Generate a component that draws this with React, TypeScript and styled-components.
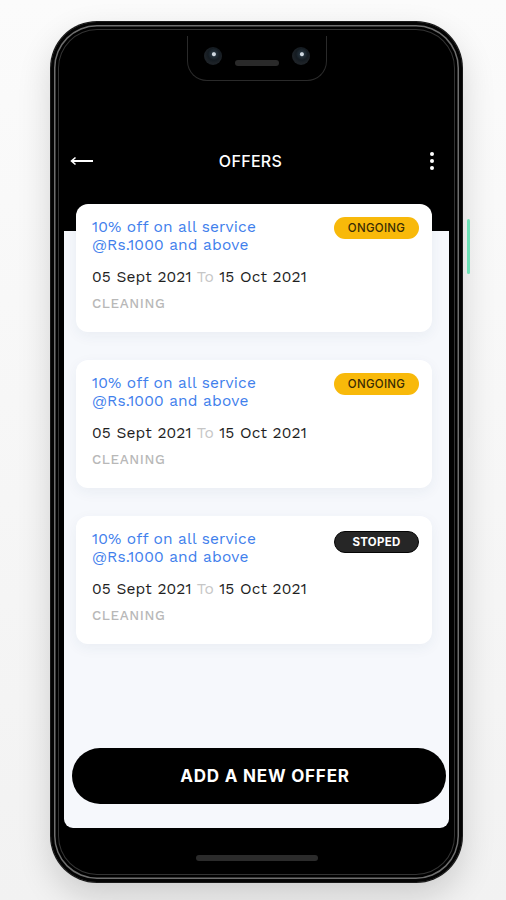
import React from "react";
import styled, { createGlobalStyle } from "styled-components";

const Global = createGlobalStyle`
  html, body { margin: 0; padding: 0; }
  body {
    background: linear-gradient(180deg, #fbfbfb 0%, #f2f2f2 100%);
    font-family: "Work Sans", Inter, "Open Sans", Arial, sans-serif;
    width: 506px;
    height: 900px;
    overflow: hidden;
  }
`;

const Stage = styled.div`
  display: flex;
  align-items: flex-start;
  padding: 22px 0 0 51px;
`;

const Phone = styled.div`
  width: 411px;
  height: 860px;
  box-sizing: border-box;
  padding: 14px 13px 12px 13px;
  background: #000;
  border-radius: 46px;
  display: flex;
  flex-direction: column;
  box-shadow:
    0 0 0 1px #1a1a1a,
    0 14px 34px rgba(0, 0, 0, 0.16),
    inset 0 0 0 3px #030303,
    inset 0 0 0 4.5px #6e6e6e,
    inset 0 0 0 7px #000,
    inset 0 0 0 8px #333;
`;

const Screen = styled.div`
  flex: 1;
  background: #000;
  border-radius: 34px;
  display: flex;
  flex-direction: column;
  overflow: hidden;
`;

const NotchRow = styled.div`
  display: flex;
  justify-content: center;
`;

const Notch = styled.div`
  width: 140px;
  height: 45px;
  box-sizing: border-box;
  border: 1px solid #2a2a2a;
  border-top: none;
  border-radius: 0 0 20px 20px;
  display: flex;
  align-items: center;
  justify-content: center;
  gap: 13px;
  padding-bottom: 4px;
`;

const Camera = styled.div`
  width: 18px;
  height: 18px;
  border-radius: 50%;
  background: radial-gradient(circle at 55% 40%, #cfd8e0 0 1.5px, #23303a 2.5px, #141b21 6px, #1d2227 9px);
`;

const Speaker = styled.div`
  width: 44px;
  height: 6px;
  border-radius: 3px;
  background: #2a2a2a;
  margin-top: 14px;
`;

const Header = styled.div`
  display: grid;
  grid-template-columns: 1fr auto 1fr;
  align-items: center;
  height: 24px;
  padding: 68px 14px 0 6px;
  margin-bottom: 58px;
`;

const BackButton = styled.div`
  width: 24px;
  height: 24px;
  display: flex;
  align-items: center;
`;

const Title = styled.div`
  color: #fff;
  font-family: Inter, "Open Sans", Arial, sans-serif;
  font-size: 16px;
  font-weight: 500;
  letter-spacing: 0.3px;
  margin-right: 4px;
`;

const Kebab = styled.div`
  justify-self: end;
  display: flex;
  flex-direction: column;
  gap: 3px;
  width: 6px;
  align-items: center;
`;

const Dot = styled.span`
  width: 4px;
  height: 4px;
  border-radius: 50%;
  background: #fff;
`;

const Content = styled.div`
  flex: 1;
  background: #f6f8fc;
  border-radius: 0 0 9px 9px;
  display: flex;
  flex-direction: column;
  padding: 0 3px 24px 8px;
`;

const CardList = styled.div`
  display: flex;
  flex-direction: column;
  gap: 28px;
  margin: -27px 14px 0 4px;
  flex: 1;
`;

const Card = styled.div`
  background: #fff;
  border-radius: 12px;
  box-shadow: 0 4px 14px rgba(40, 60, 110, 0.06);
  padding: 14px 13px 20px 16px;
  display: flex;
  justify-content: space-between;
  align-items: flex-start;
`;

const CardBody = styled.div`
  display: flex;
  flex-direction: column;
`;

const OfferTitle = styled.div`
  color: #3f80ec;
  font-size: 15.5px;
  line-height: 18px;
  letter-spacing: 0.15px;
`;

const Dates = styled.div`
  margin-top: 14px;
  color: #1f1f1f;
  font-size: 15.5px;
  line-height: 18px;
  letter-spacing: 0.15px;
`;

const To = styled.span`
  color: #c6c6c6;
`;

const Category = styled.div`
  margin-top: 8px;
  color: #b8b8b8;
  font-size: 13.5px;
  font-weight: 500;
  line-height: 18px;
  letter-spacing: 0.6px;
`;

const Badge = styled.div<{ $variant: "ongoing" | "stopped" }>`
  width: 85px;
  height: 22px;
  box-sizing: border-box;
  border-radius: 11px;
  display: flex;
  align-items: center;
  justify-content: center;
  font-family: Inter, Arial, sans-serif;
  font-size: 11.5px;
  letter-spacing: 0.3px;
  font-weight: ${(p) => (p.$variant === "ongoing" ? 500 : 700)};
  background: ${(p) => (p.$variant === "ongoing" ? "#f8b90a" : "#262626")};
  color: ${(p) => (p.$variant === "ongoing" ? "#3a2c05" : "#fff")};
  border: ${(p) => (p.$variant === "ongoing" ? "none" : "1.5px solid #050505")};
  margin-top: ${(p) => (p.$variant === "ongoing" ? "-1px" : "1px")};
  margin-left: 8px;
`;

const AddButton = styled.button`
  height: 56px;
  border: none;
  border-radius: 28px;
  background: #000;
  color: #fff;
  font-family: Inter, Arial, sans-serif;
  font-weight: 700;
  font-size: 17px;
  letter-spacing: 0.8px;
  padding: 0 0 0 12px;
  cursor: pointer;
`;

const HomeRow = styled.div`
  display: flex;
  justify-content: center;
  padding: 27px 0 9px;
`;

const HomeBar = styled.div`
  width: 122px;
  height: 6px;
  border-radius: 3px;
  background: #2b2b2b;
`;

const SideRail = styled.div`
  display: flex;
  flex-direction: column;
  gap: 56px;
  padding: 197px 0 0 5px;
`;

const RailMark = styled.div<{ $h: number; $c: string }>`
  width: 3px;
  height: ${(p) => p.$h}px;
  border-radius: 2px;
  background: ${(p) => p.$c};
`;

const offers = [
  { status: "ongoing" as const, label: "ONGOING" },
  { status: "ongoing" as const, label: "ONGOING" },
  { status: "stopped" as const, label: "STOPED" },
];

export default function App() {
  return (
    <>
      <Global />
      <Stage>
        <Phone>
          <Screen>
            <NotchRow>
              <Notch>
                <Camera />
                <Speaker />
                <Camera />
              </Notch>
            </NotchRow>
            <Header>
              <BackButton>
                <svg width="24" height="12" viewBox="0 0 24 12">
                  <path d="M23 6H2" stroke="#fff" strokeWidth="1.8" />
                  <path d="M5.5 2.5L1.5 6l4 3.5" stroke="#fff" strokeWidth="1.6" fill="none" />
                </svg>
              </BackButton>
              <Title>OFFERS</Title>
              <Kebab>
                <Dot />
                <Dot />
                <Dot />
              </Kebab>
            </Header>
            <Content>
              <CardList>
                {offers.map((o, i) => (
                  <Card key={i}>
                    <CardBody>
                      <OfferTitle>
                        10% off on all service
                        <br />
                        @Rs.1000 and above
                      </OfferTitle>
                      <Dates>
                        05 Sept 2021 <To>To</To> 15 Oct 2021
                      </Dates>
                      <Category>CLEANING</Category>
                    </CardBody>
                    <Badge $variant={o.status}>{o.label}</Badge>
                  </Card>
                ))}
              </CardList>
              <AddButton>ADD A NEW OFFER</AddButton>
            </Content>
            <HomeRow>
              <HomeBar />
            </HomeRow>
          </Screen>
        </Phone>
        <SideRail>
          <RailMark $h={55} $c="#6fe3b8" />
          <RailMark $h={108} $c="#e6e6e6" />
        </SideRail>
      </Stage>
    </>
  );
}
